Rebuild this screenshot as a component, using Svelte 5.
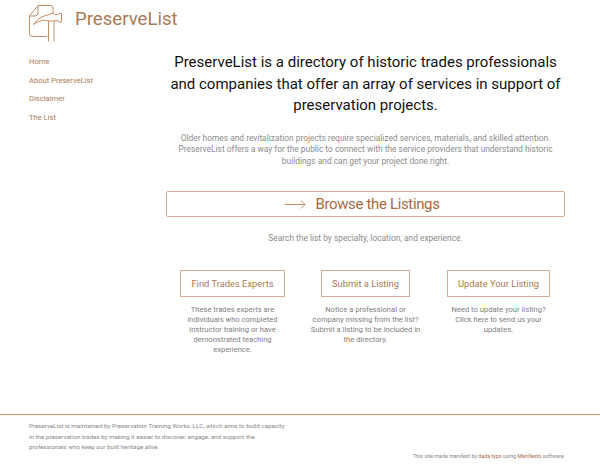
<script lang="ts">
	const nav = ['Home', 'About PreserveList', 'Disclaimer', 'The List'];

	const cards = [
		{
			label: 'Find Trades Experts',
			text: 'These trades experts are individuals who completed instructor training or have demonstrated teaching experience.'
		},
		{
			label: 'Submit a Listing',
			text: 'Notice a professional or company missing from the list? Submit a listing to be included in the directory.'
		},
		{
			label: 'Update Your Listing',
			text: 'Need to update your listing? Click here to send us your updates.'
		}
	];
</script>

<div class="page">
	<header class="site-header">
		<svg class="logo" width="34" height="38" viewBox="0 0 34 38" fill="none" stroke="#c58e66" stroke-width="1">
			<path d="M1.500 12 L10 1.500 H22 Q25 1.500 25 4 V9.500" />
			<path d="M10 1.500 V9 Q10 12 7 12 H1.500 V29.500 Q1.500 32.500 4.500 32.500 H19" />
			<path d="M5.500 20.500 C9 15 14.500 11.500 20.500 11 L23 9.500 H26 L27 10.500 H30 L31 9.500 H33.500 V18 H31 L30 16.500 H27 L26 17 H21 C15 15.500 10 17 5.500 20.500 Z" />
			<path d="M20.500 17 V37.500 M26 17 V37.500" />
		</svg>
		<a class="brand" href="#home">PreserveList</a>
	</header>

	<div class="body-row">
		<nav class="side-nav">
			{#each nav as item}
				<a href="#nav">{item}</a>
			{/each}
		</nav>

		<main class="content">
			<h1>PreserveList is a directory of historic trades professionals and companies that offer an array of services in support of preservation projects.</h1>
			<p class="intro">Older homes and revitalization projects require specialized services, materials, and skilled attention. PreserveList offers a way for the public to connect with the service providers that understand historic buildings and can get your project done right.</p>

			<a class="browse" href="#list">
				<svg width="21" height="9" viewBox="0 0 21 9" fill="none" stroke="#c58e66" stroke-width="1">
					<path d="M0 4.500 H20 M16 0.500 L20 4.500 L16 8.500" />
				</svg>
				<span>Browse the Listings</span>
			</a>
			<p class="search-note">Search the list by specialty, location, and experience.</p>

			<div class="cards">
				{#each cards as card}
					<div class="card">
						<a class="card-btn" href="#card">{card.label}</a>
						<p>{card.text}</p>
					</div>
				{/each}
			</div>
		</main>
	</div>

	<footer class="site-footer">
		<p class="about">PreserveList is maintained by Preservation Training Works, LLC, which aims to build capacity in the preservation trades by making it easier to discover, engage, and support the professionals who keep our built heritage alive.</p>
		<p class="credit">This site made manifest by <a href="#dada">dada typo</a> using <a href="#manifesto">Manifesto</a> software.</p>
	</footer>
</div>

<style>
	:global(body) {
		background: #fff;
		font-family: Roboto, sans-serif;
	}

	.page {
		height: 471px;
		overflow: hidden;
		display: flex;
		flex-direction: column;
	}

	a {
		color: #a8693f;
		text-decoration: none;
	}

	.site-header {
		display: flex;
		align-items: center;
		gap: 13px;
		padding: 3px 0 0 28px;
		height: 40px;
	}

	.brand {
		font-size: 18.600px;
		color: #a97a57;
		margin-bottom: 8px;
	}

	.body-row {
		display: flex;
		flex: 1;
	}

	.side-nav {
		width: 166px;
		padding: 13px 0 0 29px;
		box-sizing: border-box;
		display: flex;
		flex-direction: column;
		gap: 6.500px;
		font-size: 7.600px;
		line-height: 12px;
	}

	.side-nav a {
		color: #a97a57;
	}

	.content {
		width: 399px;
		padding-top: 9px;
		text-align: center;
	}

	h1 {
		margin: 0;
		font-size: 15px;
		font-weight: 400;
		line-height: 21.500px;
		color: #111;
	}

	.intro {
		margin: 16px 0 0;
		font-size: 8.400px;
		line-height: 11.500px;
		color: #8c8c8c;
	}

	.browse {
		display: flex;
		align-items: center;
		justify-content: center;
		gap: 9px;
		height: 24px;
		margin-top: 24px;
		padding-right: 6px;
		border: 1px solid #d4ae93;
		border-radius: 2px;
		font-size: 15px;
		letter-spacing: -0.35px;
		color: #a8693f;
	}

	.search-note {
		margin: 15px 0 0;
		font-size: 8.400px;
		line-height: 12px;
		color: #8c8c8c;
	}

	.cards {
		display: grid;
		grid-template-columns: repeat(3, 133px);
		margin-top: 26px;
	}

	.card {
		display: flex;
		flex-direction: column;
		align-items: center;
	}

	.card-btn {
		padding: 0 10px;
		line-height: 25px;
		border: 1px solid #d4ae93;
		font-size: 9.350px;
		white-space: nowrap;
		color: #a97a57;
	}

	.card p {
		margin: 8px 0 0;
		padding: 0 11px;
		font-size: 7.600px;
		line-height: 10px;
		color: #808080;
	}

	.site-footer {
		height: 57px;
		box-sizing: border-box;
		border-top: 1px solid #cf9570;
		padding: 6px 35px 0 29px;
		display: flex;
		justify-content: space-between;
		align-items: flex-start;
	}

	.about {
		width: 258px;
		margin: 0;
		font-size: 6.250px;
		line-height: 10.500px;
		color: #888;
	}

	.credit {
		margin: 31px 0 0;
		font-size: 5.350px;
		line-height: 8px;
		color: #888;
		white-space: nowrap;
	}
</style>
